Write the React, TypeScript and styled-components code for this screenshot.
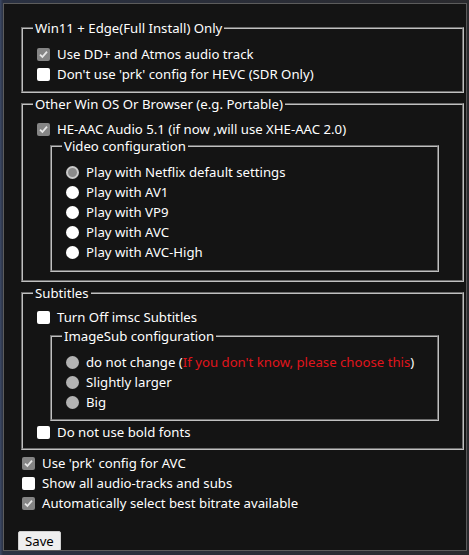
import React from "react";
import styled, { createGlobalStyle } from "styled-components";

const GlobalStyle = createGlobalStyle`
  html, body {
    margin: 0;
    padding: 0;
  }
  body {
    width: 469px;
    height: 555px;
    overflow: hidden;
    background: linear-gradient(90deg, #3d4a66 0px, #2a3142 3px, #2a2a2e 100%);
    font-family: "Noto Sans", "Open Sans", sans-serif;
  }
`;

const Panel = styled.div`
  box-sizing: border-box;
  margin: 3px 0 0 3px;
  width: 464px;
  height: 548px;
  border: 1px solid #5c5c5c;
  background: #141414;
  color: #fff;
  font-size: 13.2px;
  overflow: hidden;
`;

const Content = styled.div`
  padding: 15px 2px 0 14px;
  display: flex;
  flex-direction: column;
`;

const Group = styled.fieldset<{ $inner?: boolean; $pt?: number; $pb?: number; $mt?: number; $mb?: number }>`
  margin: ${({ $inner, $mt, $mb }) =>
    $inner ? `${$mt ?? -2}px 11px ${$mb ?? 0}px 13px` : "0 0 0 3px"};
  padding: ${({ $pt }) => $pt ?? 6}px 12px ${({ $pb }) => $pb ?? 7}px 14px;
  border: 2px groove rgb(192, 192, 192);
  min-width: 0;
  & + & {
    margin-top: 2px;
  }
`;

const Legend = styled.legend`
  margin-left: -4px;
  padding: 0 2px;
  line-height: 18px;
  height: 18px;
`;

const Row = styled.label`
  display: flex;
  align-items: center;
  height: 20px;
  gap: 7px;
  white-space: nowrap;
`;

const Box = styled.span<{ $checked?: boolean }>`
  box-sizing: border-box;
  width: 13px;
  height: 13px;
  flex: none;
  border-radius: 2px;
  background: ${({ $checked }) => ($checked ? "#858585" : "#ffffff")};
  display: flex;
  align-items: center;
  justify-content: center;
`;

const Dot = styled.span<{ $state: "off" | "on" | "disabled" }>`
  box-sizing: border-box;
  width: 13px;
  height: 13px;
  flex: none;
  border-radius: 50%;
  background: ${({ $state }) =>
    $state === "off" ? "#ffffff" : $state === "on" ? "#8a8a8a" : "#b3b3b3"};
  border: ${({ $state }) => ($state === "on" ? "2px solid #c9c9c9" : "none")};
`;

const Red = styled.span`
  color: #e0141c;
`;

const Outer = styled.div`
  padding: 3px 0 0 4px;
`;

const SaveButton = styled.button`
  align-self: flex-start;
  margin-top: 18px;
  height: 20px;
  padding: 0 6px;
  border: 1px solid #d0d0d0;
  border-radius: 2px;
  background: #efefef;
  color: #000;
  font-family: "Noto Sans", "Open Sans", sans-serif;
  font-size: 13.2px;
  line-height: 18px;
`;

const Check = ({ checked, children }: { checked?: boolean; children: React.ReactNode }) => (
  <Row>
    <Box $checked={checked}>
      {checked && (
        <svg width="11" height="11" viewBox="0 0 11 11">
          <path d="M2 5.6 L4.4 8 L9 2.6" fill="none" stroke="#e6e6e6" strokeWidth="1.8" />
        </svg>
      )}
    </Box>
    <span>{children}</span>
  </Row>
);

const Radio = ({ state = "off", children }: { state?: "off" | "on" | "disabled"; children: React.ReactNode }) => (
  <Row>
    <Dot $state={state} />
    <span>{children}</span>
  </Row>
);

export default function App() {
  return (
    <>
      <GlobalStyle />
      <Panel>
        <Content>
          <Group $pt={7}>
            <Legend>Win11 + Edge(Full Install) Only</Legend>
            <Check checked>Use DD+ and Atmos audio track</Check>
            <Check>Don't use 'prk' config for HEVC (SDR Only)</Check>
          </Group>
          <Group $pb={8}>
            <Legend>Other Win OS Or Browser (e.g. Portable)</Legend>
            <Check checked>HE-AAC Audio 5.1 (if now ,will use XHE-AAC 2.0)</Check>
            <Group $inner $pt={7} $pb={8}>
              <Legend>Video configuration</Legend>
              <Radio state="on">Play with Netflix default settings</Radio>
              <Radio>Play with AV1</Radio>
              <Radio>Play with VP9</Radio>
              <Radio>Play with AVC</Radio>
              <Radio>Play with AVC-High</Radio>
            </Group>
          </Group>
          <Group $pt={5} $pb={6}>
            <Legend>Subtitles</Legend>
            <Check>Turn Off imsc Subtitles</Check>
            <Group $inner $mt={0} $mb={1} $pt={7}>
              <Legend>ImageSub configuration</Legend>
              <Radio state="disabled">
                do not change (<Red>If you don't know, please choose this</Red>)
              </Radio>
              <Radio state="disabled">Slightly larger</Radio>
              <Radio state="disabled">Big</Radio>
            </Group>
            <Check>Do not use bold fonts</Check>
          </Group>
          <Outer>
            <Check checked>Use 'prk' config for AVC</Check>
            <Check>Show all audio-tracks and subs</Check>
            <Check checked>Automatically select best bitrate available</Check>
          </Outer>
          <SaveButton>Save</SaveButton>
        </Content>
      </Panel>
    </>
  );
}
